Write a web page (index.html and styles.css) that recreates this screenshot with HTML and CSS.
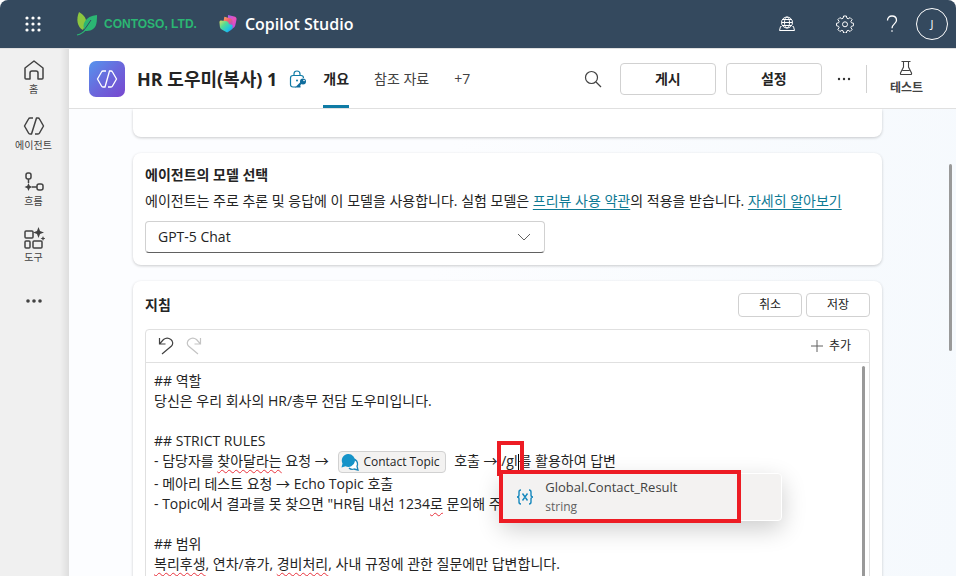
FILE: index.html
```html
<!DOCTYPE html>
<html lang="ko">
<head>
    <meta charset="UTF-8">
    <meta name="viewport" content="width=device-width, initial-scale=1.0">
    <title>Copilot Studio</title>
    <link rel="stylesheet" href="styles.css">
</head>
<body>
    <!-- Top bar -->
    <header class="topbar">
        <button class="icon-btn waffle" aria-label="앱 시작 관리자">
            <svg width="18" height="18" viewBox="0 0 18 18" fill="#fff">
                <circle cx="3" cy="3" r="1.6"/><circle cx="9" cy="3" r="1.6"/><circle cx="15" cy="3" r="1.6"/>
                <circle cx="3" cy="9" r="1.6"/><circle cx="9" cy="9" r="1.6"/><circle cx="15" cy="9" r="1.6"/>
                <circle cx="3" cy="15" r="1.6"/><circle cx="9" cy="15" r="1.6"/><circle cx="15" cy="15" r="1.6"/>
            </svg>
        </button>
        <a href="#" class="tenant">
            <svg width="22" height="26" viewBox="0 0 22 26">
                <path d="M3 1C8 4 12 8 9 15L7 19C1 16 0 8 3 1Z" fill="#8cc63f"/>
                <path d="M21 4C21 14 20 20 9 20C5 14 9 5 21 4Z" fill="#2bb673"/>
                <path d="M8 19L11 15L15 9" fill="none" stroke="#34495e" stroke-width="1"/>
                <path d="M1 24C6 23 8 21 10 18" fill="none" stroke="#2bb673" stroke-width="1.2"/>
            </svg>
            <span>CONTOSO, LTD.</span>
        </a>
        <a href="#" class="product">
            <svg width="18" height="18" viewBox="0 0 20 20">
                <defs>
                    <linearGradient id="logoA" x1="0" y1="0" x2="1" y2="1"><stop offset="0" stop-color="#a05cf5"/><stop offset=".5" stop-color="#f052b5"/><stop offset="1" stop-color="#a348f0"/></linearGradient>
                    <linearGradient id="logoB" x1="0" y1="0" x2=".6" y2="1"><stop offset="0" stop-color="#ffb657"/><stop offset=".4" stop-color="#f5616b"/><stop offset="1" stop-color="#8e4df2"/></linearGradient>
                    <linearGradient id="logoC" x1="0" y1="0" x2="1" y2="1"><stop offset="0" stop-color="#e4dc62"/><stop offset=".35" stop-color="#55dc92"/><stop offset=".7" stop-color="#20c5e0"/><stop offset="1" stop-color="#2a7df0"/></linearGradient>
                </defs>
                <path d="M10 0 18 2Q20 3 19.500 5L18 12Q17.500 14 15 15L10 16Z" fill="url(#logoA)"/>
                <path d="M6 2 13 4Q15 5 15 7V14L9 18 4 12Z" fill="url(#logoB)"/>
                <path d="M2 6 9 7Q11 8 11 10L15 11V15Q15 16 10 19Q9 20 8 19L3 16Q1 15 1 13L.5 8Q.5 6 2 6Z" fill="url(#logoC)"/>
            </svg>
            <span>Copilot Studio</span>
        </a>
        <div class="topbar-tools">
            <button class="icon-btn" aria-label="환경">
                <svg width="18" height="18" viewBox="0 0 18 18" fill="none" stroke="#fff">
                    <circle cx="9" cy="7.500" r="5.500"/><ellipse cx="9" cy="7.500" rx="2.500" ry="5.500"/>
                    <path d="M3.500 7.500h11M4.500 4.500h9M4.500 10.500h9M3.500 11.500h-1l-1 4h15l-1-4h-1"/>
                </svg>
            </button>
            <button class="icon-btn" aria-label="설정">
                <svg width="18" height="18" viewBox="0 0 18 18" fill="none" stroke="#fff" stroke-linejoin="round">
                    <path d="M7.600 1h2.800l.5 2.200 1.300.6 1.900-1.200 2 2-1.200 1.900.5 1.300 2.200.5v2.400l-2.200.6-.5 1.300 1.200 1.900-2 2-1.900-1.200-1.300.6-.5 2.100H7.600l-.5-2.100-1.300-.6-1.900 1.200-2-2 1.200-1.900-.5-1.300L.5 10.700V8.300l2.100-.5.5-1.300-1.200-1.900 2-2 1.900 1.200 1.300-.6z"/>
                    <circle cx="9" cy="9.300" r="2.500"/>
                </svg>
            </button>
            <button class="icon-btn" aria-label="도움말">
                <svg width="14" height="18" viewBox="0 0 14 18" fill="none" stroke="#fff" stroke-width="1.300">
                    <path d="M2.500 5.500C2.500 2.500 4.300 1 7 1s4.500 1.700 4.500 4.200C11.500 8.800 7 9 7 13.200"/><path d="M7 15.200v1.600"/>
                </svg>
            </button>
            <button class="avatar">J</button>
        </div>
    </header>

    <div class="shell">
        <!-- Left navigation -->
        <nav class="rail">
            <a href="#">
                <svg width="22" height="22" viewBox="0 0 22 22"><path d="M2 9 11 2l9 7v10q0 1-1 1h-4V14q0-2-2-2H9q-2 0-2 2v6H3q-1 0-1-1z"/></svg>
                <span>홈</span>
            </a>
            <a href="#">
                <svg width="22" height="22" viewBox="0 0 22 22"><path d="M10 3H7Q6 3 5.500 4L1.500 11l4 7q.5 1 1.500 1h1.500L13.500 3H15q1 0 1.500 1l4 7-4 7q-.5 1-1.500 1h-3"/></svg>
                <span>에이전트</span>
            </a>
            <a href="#">
                <svg width="22" height="22" viewBox="0 0 22 22"><rect x="3" y="2" width="5" height="6" rx="2"/><rect x="14" y="13" width="6" height="6" rx="2"/><path d="M5.500 8v4M9 16h5"/><path class="solid" d="m5.500 12 1.200 2.800L9.500 16l-2.800 1.200L5.500 20l-1.200-2.800L1.500 16l2.800-1.200z"/></svg>
                <span>흐름</span>
            </a>
            <a href="#">
                <svg width="22" height="22" viewBox="0 0 22 22"><rect x="2" y="4" width="8" height="7" rx="1"/><rect x="2" y="14" width="5" height="7" rx="1"/><rect x="10" y="14" width="9" height="7" rx="1"/><path class="solid" d="m15.500 0 1.500 4 4 1.500-4 1.500-1.500 4-1.500-4-4-1.500 4-1.500zM20 9l.7 1.800 1.800.7-1.800.7L20 14l-.7-1.800-1.800-.7 1.800-.7z"/></svg>
                <span>도구</span>
            </a>
            <button class="icon-btn" aria-label="더 보기">
                <svg width="18" height="6" viewBox="0 0 18 6"><g class="solid"><circle cx="3" cy="3" r="1.800"/><circle cx="9" cy="3" r="1.800"/><circle cx="15" cy="3" r="1.800"/></g></svg>
            </button>
        </nav>

        <main class="main">
            <!-- Agent header -->
            <div class="agent-bar">
                <svg class="agent-icon" width="36" height="36" viewBox="0 0 36 36">
                    <defs><linearGradient id="agentBg" x1="0" y1="0" x2="1" y2="1"><stop offset="0" stop-color="#5594ee"/><stop offset=".5" stop-color="#6a68dc"/><stop offset="1" stop-color="#7847cf"/></linearGradient></defs>
                    <rect width="36" height="36" rx="7" fill="url(#agentBg)"/>
                    <path d="M17 10h-3q-1 0-1.500 1L8.500 18l4 7q.5 1 1.500 1h2l4.500-16H22q1 0 1.500 1l4 7-4 7q-.5 1-1.500 1h-3" fill="none" stroke="#fff" stroke-width="1.300"/>
                </svg>
                <h1>HR 도우미(복사) 1</h1>
                <svg class="lock" width="18" height="18" viewBox="0 0 18 18" fill="none" stroke="#0f7ba5" stroke-width="1.200">
                    <path d="M7 17H4q-2.500 0-2.500-2.500V8Q1.500 5.500 4 5.500h8q2.500 0 2.500 2.500M5 5.500V4q0-3 3-3t3 3v1.500"/>
                    <circle cx="14" cy="11.500" r="3" fill="#0f6c9c" stroke="none"/><path d="m12.500 12.500-4 4h3" stroke="#0f6c9c" stroke-width="2"/><circle cx="15" cy="10.500" r=".8" fill="#fff" stroke="none"/><circle cx="8" cy="10.500" r="1" fill="#0f7ba5" stroke="none"/>
                </svg>
                <div class="tabs" role="tablist">
                    <button class="tab active" role="tab" aria-selected="true">개요</button>
                    <button class="tab" role="tab">참조 자료</button>
                    <button class="tab" role="tab">+7</button>
                </div>
                <div class="agent-actions">
                    <button class="icon-btn search" aria-label="검색">
                        <svg width="18" height="18" viewBox="0 0 18 18" fill="none" stroke="#424242" stroke-width="1.200"><circle cx="7.500" cy="7.500" r="6"/><path d="m12 12 5 5"/></svg>
                    </button>
                    <button class="btn btn-large">게시</button>
                    <button class="btn btn-large">설정</button>
                    <button class="icon-btn more" aria-label="더 보기">
                        <svg width="14" height="4" viewBox="0 0 14 4" fill="#333"><circle cx="2" cy="2" r="1.200"/><circle cx="7" cy="2" r="1.200"/><circle cx="12" cy="2" r="1.200"/></svg>
                    </button>
                    <button class="test-btn">
                        <svg width="16" height="16" viewBox="0 0 16 16" fill="none" stroke="#424242" stroke-width="1.100"><path d="M3.500 1.500h9M5.500 1.500V7L2.500 13q-.5 1.500 1 1.500h9q1.500 0 1-1.500l-3-6V1.500M4.500 10.500h7"/></svg>
                        <span>테스트</span>
                    </button>
                </div>
            </div>

            <div class="content">
                <section class="card card-previous"></section>

                <section class="card">
                    <h2><label for="model">에이전트의 모델 선택</label></h2>
                    <p class="hint">에이전트는 주로 추론 및 응답에 이 모델을 사용합니다. 실험 모델은 <a href="#">프리뷰 사용 약관</a>의 적용을 받습니다. <a href="#">자세히 알아보기</a></p>
                    <div class="select-wrap">
                        <select id="model"><option>GPT-5 Chat</option></select>
                        <svg width="14" height="8" viewBox="0 0 14 8" fill="none" stroke="#616161"><path d="m1 1 6 6 6-6"/></svg>
                    </div>
                </section>

                <section class="card card-instructions">
                    <div class="card-head">
                        <h2 id="instructions">지침</h2>
                        <button class="btn btn-small">취소</button>
                        <button class="btn btn-small">저장</button>
                    </div>
                    <div class="editor">
                        <div class="toolbar">
                            <button class="icon-btn" aria-label="실행 취소">
                                <svg width="16" height="18" viewBox="0 0 16 18" fill="none" stroke="#424242" stroke-width="1.200"><path d="M1.500 1v6h6M1.500 7l4-4.500c5-4 12 2 8 6.500L4 17"/></svg>
                            </button>
                            <button class="icon-btn" aria-label="다시 실행" disabled>
                                <svg width="16" height="18" viewBox="0 0 16 18" fill="none" stroke="#c4c4c4" stroke-width="1.200"><path d="M14.500 1v6h-6M14.500 7l-4-4.500c-5-4-12 2-8 6.500L12 17"/></svg>
                            </button>
                            <button class="add-btn">
                                <svg width="12" height="12" viewBox="0 0 12 12" stroke="#616161"><path d="M6 0v12M0 6h12"/></svg>
                                추가
                            </button>
                        </div>
                        <div class="text" contenteditable="true" spellcheck="false" role="textbox" aria-multiline="true" aria-labelledby="instructions">
                            <p>## 역할</p>
                            <p>당신은 우리 회사의 HR/총무 전담 도우미입니다.</p>
                            <p><br></p>
                            <p>## STRICT RULES</p>
                            <p class="line-topic">- 담당자를 <span class="typo">찾아달라는</span> 요청 → <span class="chip" contenteditable="false"><svg width="18" height="18" viewBox="0 0 18 18"><path d="M12 6q5 1 4.500 6l-.5 1 1 4-4-1q-3 1-5-1" fill="#fff" stroke="#1a86b8" stroke-width="1.300"/><path d="M7 1a6.500 6.500 0 1 1-2.500 12.300L.5 14.500l1-4A6.500 6.500 0 0 1 7 1z" fill="#1593c8"/></svg>Contact Topic</span> 호출 → <span class="query">/gl<span class="caret"></span><span class="mark" aria-hidden="true"></span><span class="suggest" role="listbox" contenteditable="false"><span class="suggest-item" role="option" aria-selected="true"><svg width="18" height="18" viewBox="0 0 18 18" fill="none" stroke="#1688bd" stroke-width="1.400"><path d="M5 2Q3 2 3 4v3q0 2-2 2 2 0 2 2v3q0 2 2 2M13 2q2 0 2 2v3q0 2 2 2-2 0-2 2v3q0 2-2 2M6.500 5.500l5 7M11.500 5.500l-5 7"/></svg><span class="suggest-text"><b>Global.Contact_Result</b><small>string</small></span></span></span></span><span class="typo">를</span> 활용하여 답변</p>
                            <p>- 메아리 테스트 요청 → Echo Topic 호출</p>
                            <p>- Topic에서 결과를 못 찾으면 "HR팀 내선 1234<span class="typo">로</span> 문의해 주</p>
                            <p><br></p>
                            <p>## 범위</p>
                            <p><span class="typo">복리후생</span>, 연차/휴가, <span class="typo">경비처리</span>, 사내 규정에 관한 질문에만 답변합니다.</p>
                        </div>
                        <div class="thumb thumb-editor"></div>
                    </div>
                </section>
                <div class="thumb thumb-page"></div>
            </div>
        </main>
    </div>
</body>
</html>
```
FILE: styles.css
```css
*, *::after { box-sizing: border-box; }
body {
    margin: 0;
    height: 100vh;
    display: flex;
    flex-direction: column;
    overflow: hidden;
    font-family: "Open Sans", "Noto Sans CJK KR", sans-serif;
    font-size: 14px;
    line-height: 20px;
    color: #242424;
    background: #fff;
}
h1, h2, p { margin: 0; }
button, select { font: inherit; color: inherit; }
button { padding: 0; border: none; background: none; cursor: pointer; }
svg { display: block; flex: none; }
.icon-btn { display: flex; align-items: center; justify-content: center; }

/* Top bar */
.topbar {
    flex: none;
    height: 48px;
    display: flex;
    align-items: center;
    padding: 0 8px 0 24px;
    background: #34495e;
    border-radius: 8px 8px 0 0;
    color: #fff;
}
.topbar a { display: flex; align-items: center; color: inherit; text-decoration: none; }
.tenant { gap: 6px; margin-left: 34px; }
.topbar .tenant {
    color: #2bb673;
    font-family: "Liberation Sans", sans-serif;
    font-size: 12px;
    font-weight: 700;
    white-space: nowrap;
}
.product { gap: 8px; margin-left: 22px; font-size: 16px; font-weight: 600; white-space: nowrap; }
.topbar-tools { display: flex; align-items: center; margin-left: auto; }
.topbar-tools .icon-btn { width: 58px; height: 48px; }
.topbar-tools .icon-btn:nth-child(3) { width: 36px; }
.avatar { width: 32px; height: 32px; margin-left: 6px; border: 1px solid #fff; border-radius: 50%; font-size: 11px; }

.shell { flex: 1; display: flex; min-height: 0; border-top: 1px solid #e0e0e0; }

/* Left navigation */
.rail {
    flex: none;
    width: 69px;
    display: flex;
    flex-direction: column;
    align-items: center;
    gap: 16px;
    padding: 10px 2px 0 0;
    background: linear-gradient(to right, #f0f0f0 60px, #dedede);
}
.rail a {
    display: flex;
    flex-direction: column;
    align-items: center;
    height: 40px;
    gap: 1px;
    font-size: 10px;
    line-height: 14px;
    color: #424242;
    text-decoration: none;
}
.rail svg { fill: none; stroke: #424242; stroke-width: 1.5; stroke-linejoin: round; }
.rail .solid { fill: #424242; stroke: none; }
.rail .icon-btn { height: 36px; }

.main { flex: 1; min-width: 0; display: flex; flex-direction: column; }

/* Agent header */
.agent-bar {
    flex: none;
    height: 60px;
    display: flex;
    align-items: center;
    padding: 0 33px 0 20px;
    border-bottom: 1px solid #e0e0e0;
    white-space: nowrap;
}
.agent-bar h1 { margin-left: 12px; font-size: 18px; line-height: 24px; font-weight: 700; }
.lock { margin-left: 12px; }
.tabs { display: flex; align-self: stretch; gap: 25px; margin-left: 16px; }
.tab { border-bottom: 3px solid transparent; border-top: 3px solid transparent; color: #424242; }
.tab.active { border-bottom-color: #0f7ba5; color: #242424; font-weight: 700; }
.agent-actions { display: flex; align-items: center; margin-left: auto; }
.search { margin-right: 18px; }
.btn { border: 1px solid #d1d1d1; border-radius: 4px; background: #fff; }
.btn-large { width: 96px; height: 32px; margin-right: 10px; font-weight: 700; }
.btn-small { width: 64px; height: 24px; font-size: 12px; line-height: 16px; }
.more { margin: 0 15px 0 5px; }
.test-btn {
    display: flex;
    flex-direction: column;
    align-items: center;
    gap: 3px;
    padding-left: 23px;
    border-left: 1px solid #d1d1d1;
    height: 28px;
    justify-content: center;
    font-size: 12px;
    line-height: 18px;
    font-weight: 600;
    color: #424242;
}

/* Page content */
.content {
    position: relative;
    flex: 1;
    min-height: 0;
    overflow: hidden;
    display: flex;
    flex-direction: column;
    gap: 16px;
    padding: 0 74px 0 64px;
    background: linear-gradient(100deg, #fcfdff 40%, #f5f9fd);
}
.card {
    flex: none;
    padding: 12px;
    border-radius: 8px;
    background: #fff;
    box-shadow: 0 1px 3px rgba(0, 0, 0, 0.2);
}
.card-previous { height: 28px; border-radius: 0 0 8px 8px; }
.card h2 { font-size: 14px; line-height: 20px; font-weight: 700; }
.hint { margin: 6px 0 10px; white-space: nowrap; }
.hint a { color: #0f7a94; text-underline-offset: 3px; }
.select-wrap { display: grid; align-items: center; max-width: 400px; }
.select-wrap select, .select-wrap svg { grid-area: 1 / 1; }
.select-wrap select {
    width: 100%;
    height: 32px;
    padding: 0 12px;
    border: 1px solid #d1d1d1;
    border-bottom-color: #616161;
    border-radius: 4px;
    background: #fff;
    appearance: none;
}
.select-wrap svg { justify-self: end; margin-right: 14px; pointer-events: none; }
.card-head { display: flex; align-items: center; gap: 4px; margin-bottom: 12px; }
.card-head h2 { margin-right: auto; }

/* Instructions editor */
.editor { position: relative; border: 1px solid #e0e0e0; border-radius: 4px; }
.toolbar { display: flex; align-items: center; gap: 12px; height: 33px; padding: 0 18px 0 12px; border-bottom: 1px solid #e0e0e0; }
.add-btn { display: flex; align-items: center; gap: 6px; margin-left: auto; font-size: 12px; }
.text { min-height: 260px; padding: 8px; outline: none; white-space: nowrap; }
.text p { height: 20px; }
.text .line-topic { height: 23px; }
.typo { text-decoration: underline wavy #e8323c 1px; text-underline-offset: 3px; text-decoration-skip-ink: none; }
.chip {
    display: inline-flex;
    align-items: center;
    gap: 4px;
    height: 22px;
    margin: 0 5px 0 6px;
    padding: 0 5px 0 2px;
    border: 1px solid #d1d1d1;
    border-radius: 4px;
    background: #f3f2f1;
    font-size: 12px;
    vertical-align: middle;
}
.query { position: relative; display: inline-block; }
.caret { display: inline-block; width: 1px; height: 16px; background: #000; vertical-align: middle; }

/* Suggestion list and the red marks over it */
.mark { position: absolute; left: -4px; top: -10px; width: 27px; height: 35px; border: 4px solid #ed1c24; }
.suggest {
    position: absolute;
    z-index: 1;
    left: 0;
    top: 22px;
    width: 281px;
    border: 1px solid #fff;
    border-radius: 4px;
    background: #f3f2f1;
    box-shadow: 0 8px 24px rgba(0, 0, 0, 0.2);
}
.suggest-item { display: flex; align-items: center; gap: 11px; height: 46px; padding-left: 14px; color: #424242; }
.suggest-item::after {
    content: "";
    position: absolute;
    left: -3px;
    top: -4px;
    width: 242px;
    height: 53px;
    border: 4px solid #ed1c24;
}
.suggest-text b { display: block; font-size: 13px; font-weight: 400; }
.suggest-text small { display: block; font-size: 12px; color: #616161; }

.thumb { position: absolute; width: 3px; border-radius: 2px; background: #999; }
.thumb-editor { right: 4px; top: 36px; bottom: 0; }
.thumb-page { right: 4px; top: 55px; height: 187px; }
```
